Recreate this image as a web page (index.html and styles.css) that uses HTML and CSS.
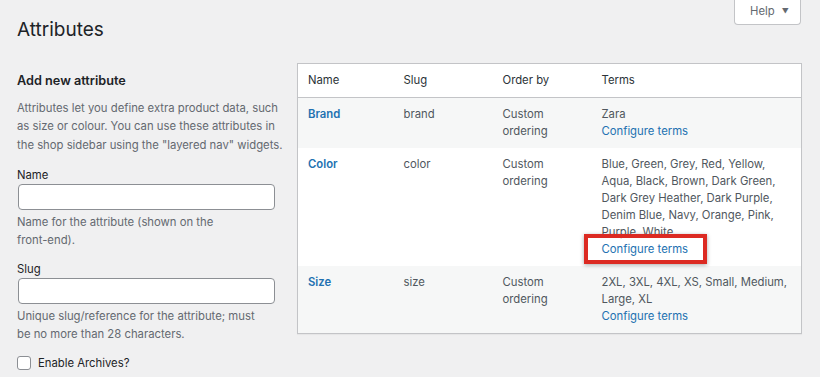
FILE: index.html
```html
<!DOCTYPE html>
<html lang="en">
<head>
<meta charset="utf-8">
<title>Attributes</title>
<link rel="stylesheet" href="styles.css">
</head>
<body>
<div class="wrap">
  <div class="header">
    <h1 class="title">Attributes</h1>
    <button class="help" type="button">Help <span class="caret">▼</span></button>
  </div>
  <div class="cols">
    <div class="col-left">
      <h2 class="form-title">Add new attribute</h2>
      <p class="desc intro">Attributes let you define extra product data, such as size or colour. You can use these attributes in the shop sidebar using the "layered nav" widgets.</p>
      <div class="field first">
        <label class="label" for="attr-name">Name</label>
        <input class="text-input" id="attr-name" type="text">
        <p class="desc field-desc">Name for the attribute (shown on the <span class="nowrap">front-end).</span></p>
      </div>
      <div class="field">
        <label class="label" for="attr-slug">Slug</label>
        <input class="text-input" id="attr-slug" type="text">
        <p class="desc field-desc">Unique slug/reference for the attribute; must be no more than 28 characters.</p>
      </div>
      <div class="check-row">
        <span class="checkbox"></span>
        <span class="check-label">Enable Archives?</span>
      </div>
    </div>
    <div class="col-right">
      <table class="attr-table">
        <thead>
          <tr><th class="c-name">Name</th><th class="c-slug">Slug</th><th class="c-order">Order by</th><th class="c-terms">Terms</th></tr>
        </thead>
        <tbody>
          <tr class="alt">
            <td><a class="name-link" href="#">Brand</a></td>
            <td>brand</td>
            <td>Custom ordering</td>
            <td>Zara<br><a class="link" href="#">Configure terms</a></td>
          </tr>
          <tr>
            <td><a class="name-link" href="#">Color</a></td>
            <td>color</td>
            <td>Custom ordering</td>
            <td>Blue, Green, Grey, Red, Yellow, Aqua, Black, Brown, Dark Green, Dark Grey Heather, Dark Purple, Denim Blue, Navy, Orange, Pink, Purple, White<br><a class="link highlight" href="#">Configure terms</a></td>
          </tr>
          <tr class="alt">
            <td><a class="name-link" href="#">Size</a></td>
            <td>size</td>
            <td>Custom ordering</td>
            <td>2XL, 3XL, 4XL, XS, Small, Medium, Large, XL<br><a class="link" href="#">Configure terms</a></td>
          </tr>
        </tbody>
      </table>
    </div>
  </div>
</div>
</body>
</html>
```
FILE: styles.css
```css
* { box-sizing: border-box; }
html, body { margin: 0; padding: 0; }
body {
  background: #f0f0f1;
  font-family: Inter, "Noto Sans", "Liberation Sans", sans-serif;
  font-size: 11.3px;
  color: #3c434a;
  width: 820px;
  height: 377px;
  overflow: hidden;
}
.wrap { padding: 0 18px 0 17px; }
.header {
  display: flex;
  justify-content: space-between;
  align-items: flex-start;
  height: 45px;
}
.title {
  margin: 0;
  padding-top: 15px;
  font-size: 19px;
  line-height: 30px;
  font-weight: 400;
  color: #1d2327;
}
.help {
  height: 25px;
  width: 67px;
  margin-right: 1px;
  background: #fff;
  border: 1px solid #c3c4c7;
  border-top: none;
  border-radius: 0 0 4px 4px;
  font-family: inherit;
  font-size: 11.3px;
  color: #646970;
  padding: 0 0 2px 4px;
}
.caret { font-size: 7px; margin-left: 4px; vertical-align: 1px; }
.cols {
  display: grid;
  grid-template-columns: 268px 505px;
  column-gap: 12px;
  margin-top: 18px;
}
.form-title {
  margin: 9px 0 0;
  font-size: 12.7px;
  line-height: 18px;
  font-weight: 600;
  color: #1d2327;
}
.desc {
  margin: 0;
  color: #646970;
  line-height: 18.3px;
}
.intro { margin-top: 9px; }
.field { margin-top: 12px; }
.field + .field { margin-top: 10.4px; }
.field-desc { margin-top: 3px; width: 254px; }
.nowrap { white-space: nowrap; }
.label {
  display: block;
  line-height: 18px;
  color: #1d2327;
}
.text-input {
  display: block;
  width: 257px;
  height: 26px;
  margin: 0 0 0 1px;
  background: #fff;
  border: 1px solid #8c8f94;
  border-radius: 4px;
  font: inherit;
}
.check-row {
  display: flex;
  align-items: center;
  gap: 7px;
  margin-top: 10.4px;
  height: 18px;
}
.checkbox {
  width: 14px;
  height: 14px;
  background: #fff;
  border: 1px solid #8c8f94;
  border-radius: 3px;
}
.check-label { color: #1d2327; }
.attr-table {
  width: 505px;
  border-collapse: collapse;
  table-layout: fixed;
  background: #fff;
  border: 1px solid #c3c4c7;
  box-shadow: 0 1px 1px rgba(0,0,0,.04);
}
.attr-table th, .attr-table td {
  text-align: left;
  vertical-align: top;
  padding: 8px 10px;
  line-height: 17px;
  font-weight: 400;
}
.attr-table th {
  color: #2c3338;
  border-bottom: 1px solid #c3c4c7;
}
.attr-table td { color: #50575e; }
.c-name { width: 96px; }
.c-slug { width: 99px; }
.c-order { width: 99px; }
.attr-table tr.alt td { background: #f6f7f7; }
.name-link {
  color: #2271b1;
  font-weight: 600;
  text-decoration: none;
}
.link { color: #2271b1; text-decoration: none; }
.highlight {
  position: relative;
  display: inline-block;
  line-height: 17px;
}
.highlight::after {
  content: "";
  position: absolute;
  top: -7px;
  left: -18px;
  right: -19px;
  bottom: -6px;
  border: 4px solid #dc2a22;
  box-shadow: 0 1px 4px rgba(0,0,0,.35);
}
```
